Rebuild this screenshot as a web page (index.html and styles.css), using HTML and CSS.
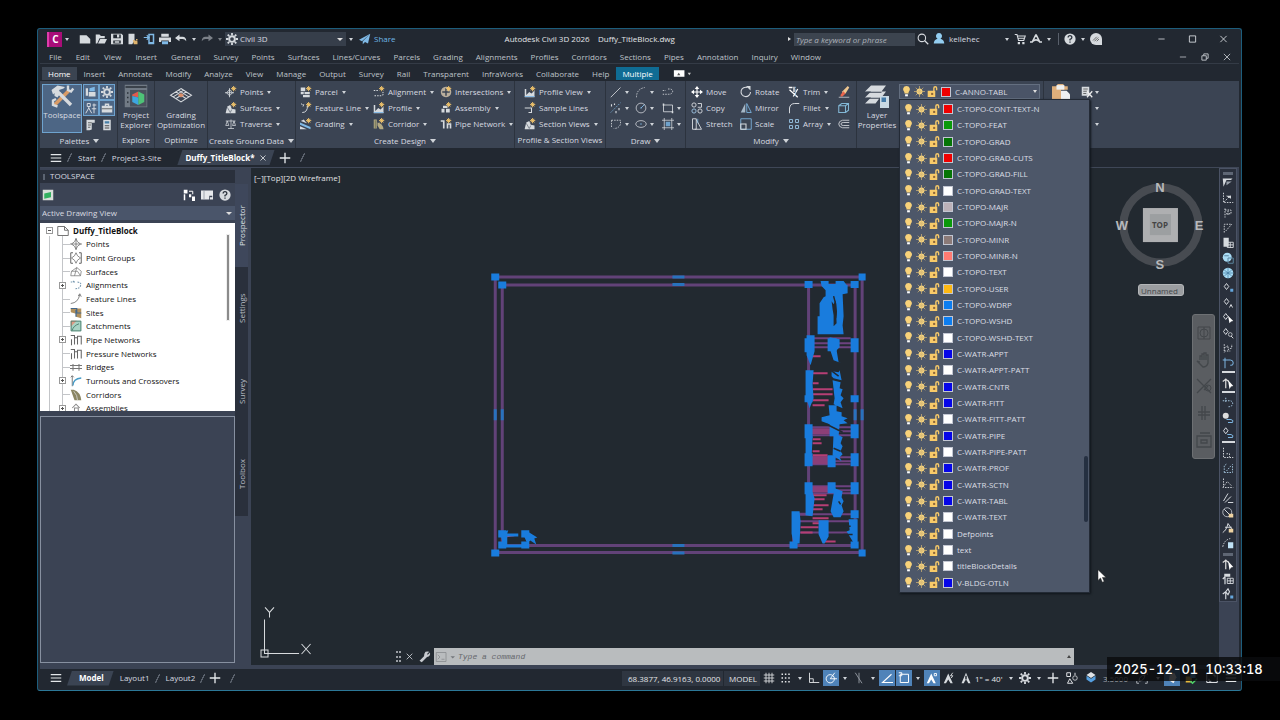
FILE: index.html
```html
<!DOCTYPE html>
<html lang="en">
<head>
<meta charset="utf-8">
<title>Autodesk Civil 3D 2026 - Duffy_TitleBlock.dwg</title>
<link rel="stylesheet" href="styles.css">
</head>
<body>
<div class="window">
  <header class="titlebar">
    <button class="logo" aria-label="Application menu">C</button>
    <button class="caret"></button>
    <div class="quick">
      <button data-icon="new"></button><button data-icon="open"></button><button data-icon="save"></button><button data-icon="saveas"></button><button data-icon="mobile"></button><button data-icon="print"></button><button data-icon="undo"></button>
    </div>
    <button class="caret"></button>
    <button class="slot dim" data-icon="redo"></button>
    <button class="caret dim"></button>
    <label class="workspace"><span data-icon="gear"></span><select aria-label="Workspace"><option>Civil 3D</option></select></label>
    <button class="caret"></button>
    <button class="share"><span data-icon="plane"></span>Share</button>
    <h1 class="caption">Autodesk Civil 3D 2026 &nbsp;&nbsp; Duffy_TitleBlock.dwg</h1>
    <button class="caret side"></button>
    <input class="search" type="text" aria-label="Search" placeholder="Type a keyword or phrase">
    <button class="slot" data-icon="mag"></button>
    <button class="slot" data-icon="user"></button>
    <span class="username">kellehec</span>
    <button class="caret"></button>
    <button class="slot" data-icon="cart"></button>
    <button class="slot" data-icon="auto"></button>
    <button class="caret"></button>
    <span class="vline"></span>
    <button class="slot" data-icon="help"></button>
    <button class="caret"></button>
    <button class="slot assist" data-icon="assist"></button>
    <button class="win" data-icon="min"></button><button class="win" data-icon="max"></button><button class="win" data-icon="close"></button>
  </header>

  <nav class="menubar">
    <a href="#">File</a><a href="#">Edit</a><a href="#">View</a><a href="#">Insert</a><a href="#">General</a><a href="#">Survey</a><a href="#">Points</a><a href="#">Surfaces</a><a href="#">Lines/Curves</a><a href="#">Parcels</a><a href="#">Grading</a><a href="#">Alignments</a><a href="#">Profiles</a><a href="#">Corridors</a><a href="#">Sections</a><a href="#">Pipes</a><a href="#">Annotation</a><a href="#">Inquiry</a><a href="#">Window</a>
    <span class="docbuttons"><button data-icon="min"></button><button data-icon="restore"></button><button data-icon="close"></button></span>
  </nav>

  <nav class="tabs">
    <button class="on">Home</button><button>Insert</button><button>Annotate</button><button>Modify</button><button>Analyze</button><button>View</button><button>Manage</button><button>Output</button><button>Survey</button><button>Rail</button><button>Transparent</button><button>InfraWorks</button><button>Collaborate</button><button>Help</button><button class="context">Multiple</button><button class="fold" data-icon="fold"></button>
  </nav>

  <section class="ribbon">
    <div class="panel palettes">
      <div class="body">
        <button class="big lit"><span data-icon="tools"></span>Toolspace</button>
        <div class="pals">
          <button class="lit" data-icon="pal1"></button><button class="lit" data-icon="gear"></button>
          <button class="lit" data-icon="tripod"></button><button class="lit" data-icon="case"></button>
          <button data-icon="sheet"></button><button data-icon="calc"></button>
        </div>
      </div>
      <button class="name drop">Palettes</button>
    </div>
    <div class="panel explore">
      <div class="body"><button class="big"><span data-icon="explorer"></span>Project<br>Explorer</button></div>
      <span class="name">Explore</span>
    </div>
    <div class="panel optimize">
      <div class="body"><button class="big"><span data-icon="grading"></span>Grading<br>Optimization</button></div>
      <span class="name">Optimize</span>
    </div>
    <div class="panel ground">
      <div class="body rows">
        <button class="cmd drop"><span data-icon="cgpoint"></span>Points</button>
        <button class="cmd drop"><span data-icon="surface"></span>Surfaces</button>
        <button class="cmd drop"><span data-icon="scale2"></span>Traverse</button>
      </div>
      <button class="name drop">Create Ground Data</button>
    </div>
    <div class="panel design">
      <div class="body rows">
        <button class="cmd drop"><span data-icon="parcel"></span>Parcel</button>
        <button class="cmd drop"><span data-icon="feature"></span>Feature Line</button>
        <button class="cmd drop"><span data-icon="slope"></span>Grading</button>
        <button class="cmd drop"><span data-icon="align"></span>Alignment</button>
        <button class="cmd drop"><span data-icon="profile"></span>Profile</button>
        <button class="cmd drop"><span data-icon="corridor"></span>Corridor</button>
        <button class="cmd drop"><span data-icon="cross"></span>Intersections</button>
        <button class="cmd drop"><span data-icon="assembly"></span>Assembly</button>
        <button class="cmd drop"><span data-icon="pipe"></span>Pipe Network</button>
      </div>
      <button class="name drop">Create Design</button>
    </div>
    <div class="panel views">
      <div class="body rows">
        <button class="cmd drop"><span data-icon="profile"></span>Profile View</button>
        <button class="cmd"><span data-icon="sample"></span>Sample Lines</button>
        <button class="cmd drop"><span data-icon="surface"></span>Section Views</button>
      </div>
      <span class="name">Profile &amp; Section Views</span>
    </div>
    <div class="panel draw">
      <div class="body rows">
        <button class="cmd drop"><span data-icon="line"></span></button>
        <button class="cmd drop"><span data-icon="dots"></span></button>
        <button class="cmd drop"><span data-icon="curve"></span></button>
        <button class="cmd drop"><span data-icon="arc"></span></button>
        <button class="cmd drop"><span data-icon="circle"></span></button>
        <button class="cmd drop"><span data-icon="ellipse"></span></button>
        <button class="cmd"><span data-icon="pline"></span></button>
        <button class="cmd drop"><span data-icon="rect"></span></button>
        <button class="cmd drop"><span data-icon="hatch"></span></button>
      </div>
      <button class="name drop">Draw</button>
    </div>
    <div class="panel modify">
      <div class="body rows">
        <button class="cmd"><span data-icon="move"></span>Move</button>
        <button class="cmd"><span data-icon="copy"></span>Copy</button>
        <button class="cmd"><span data-icon="stretch"></span>Stretch</button>
        <button class="cmd"><span data-icon="rotate"></span>Rotate</button>
        <button class="cmd"><span data-icon="mirror"></span>Mirror</button>
        <button class="cmd"><span data-icon="scale"></span>Scale</button>
        <button class="cmd drop"><span data-icon="trim"></span>Trim</button>
        <button class="cmd drop"><span data-icon="fillet"></span>Fillet</button>
        <button class="cmd drop"><span data-icon="array"></span>Array</button>
        <button class="cmd"><span data-icon="erase"></span></button>
        <button class="cmd"><span data-icon="box3d"></span></button>
        <button class="cmd"><span data-icon="offset"></span></button>
      </div>
      <button class="name drop">Modify</button>
    </div>
    <div class="panel layers">
      <div class="body">
        <button class="big"><span data-icon="layers"></span>Layer<br>Properties</button>
        <div class="combo">
          <button class="current"><span data-icon="bulb"></span><span data-icon="sun"></span><span data-icon="lock"></span><span class="swatch red"></span>C-ANNO-TABL</button>
          <ul class="layerlist" role="listbox" aria-label="Layers"></ul>
        </div>
      </div>
    </div>
    <div class="panel clip">
      <div class="body">
        <button class="paste" data-icon="paste"></button>
        <div class="stack"><button class="cmd drop"><span data-icon="cut"></span></button><button class="cmd drop"><span></span></button><button class="cmd drop"><span></span></button></div>
      </div>
    </div>
  </section>

  <nav class="files">
    <button class="burger" data-icon="burger"></button><i class="slash"></i>
    <a href="#">Start</a><i class="slash"></i><a href="#">Project-3-Site</a><a class="on" href="#">Duffy_TitleBlock*<span data-icon="close"></span></a>
    <button class="plus" data-icon="plus"></button><i class="slash"></i>
  </nav>

  <main class="work">
    <aside class="toolspace">
      <h2>TOOLSPACE</h2>
      <div class="tsbar"><button data-icon="green"></button><button class="push" data-icon="blocks"></button><button data-icon="panel"></button><button data-icon="help"></button></div>
      <div class="tsview"><select aria-label="View"><option>Active Drawing View</option></select></div>
      <div class="treebox"><ul class="tree"></ul><span class="thumb"></span></div>
      <div class="preview"></div>
    </aside>
    <nav class="sidetabs"><button class="on">Prospector</button><button>Settings</button><button>Survey</button><button>Toolbox</button></nav>
    <section class="canvas">
      <svg class="drawing" viewBox="251 168 967 498" preserveAspectRatio="xMinYMin slice">
        <g class="frame">
          <path d="M495 277H861.500V552H495ZM502 285H854.500V545H502Z"/>
          <path d="M808 285V514H793V545"/>
        </g>
        <g class="bands">
          <path d="M808 338H850M808 343H854M808 347H854M808 427H854M808 431H854M808 435H854M808 457H854M808 461H854M808 464H850M808 486H854M808 490H854M808 493H854M793 514H854M793 521H850M797 532H850"/>
        </g>
        <path class="band" d="M808 428h22v6h-22zM808 456h22v8h-22zM808 486h22v6h-22z"/>
        <path class="pink" d="M812 356H820M812 373H827M812 383H818M812 389H832M812 394H832M812 400H828M812 405H824M812 439H820M812 443H821M812 451H819M812 455H827M812 495H826M812 499H824M812 505H828M812 509H822M812 518H828M812 523H824M800 527H818M800 532H812M824 541H835M505 536L514 535"/>
        <g class="grips">
          <path d="M491 273.500h8v7h-8zM498 281.500h8v7h-8zM858 273.500h7v7h-7zM858 549h7v7h-7zM491 549h8v7h-8zM498 541h8v7h-8zM521 541h8v7h-8zM498 530h8v7h-8zM521 530h8v7h-8zM804 281h8v7h-8zM850 281h8v7h-8zM850 395h8v7h-8zM804 395h8v7h-8zM789 541h8v7h-8zM850 541h8v7h-8z"/>
          <path d="M804 338h8v14h-8zM850 338h8v14h-8zM827 338h9v13h-9zM804 424h8v14h-8zM850 424h8v14h-8zM804 453h8v13h-8zM850 453h8v13h-8zM827 455h8v12h-8zM804 482h8v12h-8zM850 482h8v12h-8zM827 482h8v11h-8zM850 510h8v8h-8z"/>
          <path class="mid" d="M672 275.500h12v3h-12zM672 283h12v3h-12zM672 543.500h12v3h-12zM672 551h12v3h-12zM493.500 409h3v11h-3zM500.500 409h3v11h-3zM860 409h3v11h-3zM853 409h3v11h-3z"/>
          <path d="M820 281h8v3h7v-3h8l3 4h1v8l-5 1 1 22-1 9 1 9h-11v-7l4-4-1-23-2 4-2-3 1 8 1 6v19h-16v-18h2v-13l4-6 2-1v-6l-4-4z"/>
          <path d="M806 335h8v16l-4 14-4-10v-20zM804 370h9l-1 14 1 14-4 10-4-12v-26zM805 436h7l-1 22h-6zM805 492h7l2 6-2 18-7-1zM829 337l10 2v8l-3 3 2 12 3 1-8-3-4-12zM831 371l7 1 1-2 2 10-8-2-2-2zM832 380l8 2-1 6 3 1-2 6 3 3-3 4 2 6-9-4 1-6zM828 405h8v6l5 1v4l6 2-4 2 4 3-8 1-1 12h-9v-12l-8-3v-4l8-2zM833 432l9 5-2 6 2 3-2 5 2 3-3 3 2 4-9-6zM834 488l8 3-1 6 2 4-2 4 2 6-3 6h-7l-3-6z"/>
          <path d="M791 511h8l1 10-1 22h-6l-2-10zM818 520h10v16l-4 7h-2l-4-9zM848 519h9v22l-3 3-8-13 3-1zM500 532l8-2-1 3h11v3h-11v8h16v3h-20zM525 532h4l8 5-3 1 2 6-6-4-3 3-4-9z"/>
        </g>
        <path class="gap" d="M833 296q4 12 2 22M826 424l16 8M830 370l8 6M833 448l7 3M843 526h7M843 534h9M838 501l2 3"/>
        <g class="ucs"><path d="M264.500 619V653H299M261 649.500h7v7h-7zM265 607l4.500 5 4.500-5M269.500 612v5M301.500 643.500l9 10M310.500 643.500l-9 10"/></g>
        <circle class="ring" cx="1160" cy="225" r="37.500"/>
        <rect class="cubeface" x="1142" y="208" width="35" height="34"/><rect class="cubecore" x="1149" y="214" width="21" height="21"/>
        <g class="compass"><text x="1159" y="192">N</text><text x="1159" y="269">S</text><text x="1121" y="230">W</text><text x="1198" y="230">E</text></g>
        <text class="top" x="1159" y="228">TOP</text>
      </svg>
      <span class="viewlabel">[&minus;][Top][2D Wireframe]</span>
      <button class="unnamed">Unnamed</button>
      <div class="navbar"><span data-icon="wheel"></span><span data-icon="hand"></span><span data-icon="zoomx"></span><span data-icon="orbit"></span><span data-icon="movie"></span></div>
      <div class="commandline">
        <span class="grip"></span><button data-icon="close"></button><button data-icon="wrench"></button>
        <div class="entry"><span data-icon="prompt"></span><input type="text" aria-label="Command" placeholder="Type a command"><button class="up"></button></div>
      </div>
    </section>
    <aside class="rightbar"><div class="strip"></div></aside>
  </main>

  <footer class="status">
    <div class="files layouts"><button class="burger" data-icon="burger"></button><a class="on" href="#">Model</a><a href="#">Layout1</a><i class="slash"></i><a href="#">Layout2</a><i class="slash"></i><button class="plus" data-icon="plus"></button><i class="slash"></i></div>
    <div class="toggles">
      <span class="coords">68.3877, 46.9163, 0.0000</span><button class="model">MODEL</button>
      <button data-icon="grid"></button><button data-icon="snap"></button><button class="caret"></button>
      <button data-icon="ortho"></button><button class="lit" data-icon="polar"></button><button class="caret"></button>
      <button data-icon="iso"></button><button class="caret"></button>
      <button class="lit" data-icon="angle"></button><button class="lit" data-icon="osnap"></button><button class="caret"></button>
      <button class="lit" data-icon="anno1"></button><button data-icon="anno2"></button><button data-icon="anno3"></button>
      <button class="ratio">1" = 40'</button><button class="caret"></button>
      <button data-icon="gear"></button><button class="caret"></button>
      <button data-icon="plus"></button><button class="wide" data-icon="shapes"></button><button data-icon="hex"></button>
      <span class="value">3.5000</span>
      <button class="wide" data-icon="leaf"></button><button class="caret"></button><button class="lit" data-icon="tag"></button><button class="wide" data-icon="cards"></button><button class="wide" data-icon="full"></button><button data-icon="burger"></button>
    </div>
  </footer>
</div>
<svg class="pointer" viewBox="0 0 10 14"><path d="M1 .7V11.400L3.500 9 5.300 13.200 7.200 12.400 5.400 8.400H9Z"/></svg>
<time class="stamp">2025-12-01&nbsp; 10:33:18</time>
<script src="app.js"></script>
</body>
</html>
```
FILE: styles.css
```css
*{box-sizing:border-box}
body{margin:0;height:100vh;padding:28px 38px 29px 37px;background:#000;color:#d8dbe0;font:8px/12px "Open Sans","Noto Sans",sans-serif;overflow:hidden;position:relative}
button,input,select{font:inherit;color:inherit;background:none;border:0;padding:0;margin:0;text-align:left}
a{color:inherit;text-decoration:none}
h1,h2,ul{margin:0;padding:0;font:inherit;list-style:none}
svg{display:block;width:100%;height:100%}
[data-icon]{display:inline-block;flex:none;width:12px;height:12px}
.window{height:100%;display:flex;flex-direction:column;background:#222831;border:1px solid #1d5d7c;border-radius:3px;border-bottom-color:#2c7898;white-space:nowrap;padding:0 2px 0 2px}
.caret{flex:none;width:10px;height:12px;display:grid;place-items:center}
.caret::after,.drop::after{content:"";border:2px solid transparent;border-top:3px solid #cfd3d8;border-bottom:0}
.dim{opacity:.5}
.caret.side::after{border:2px solid transparent;border-left:3px solid #ddd;border-right:0}

.titlebar{flex:none;height:20px;display:flex;align-items:center;padding:0 0 0 7px}
.logo{width:15px;height:15px;background:#a90d78;border-left:2px solid #de3cab;color:#fff;font-weight:700;font-size:10px;line-height:14px;text-align:center}
.quick{display:flex;margin-left:5px}
.quick [data-icon]{margin:0 2px}
.slot[data-icon]{margin:0 2px}
.workspace{display:flex;align-items:center;width:121px;height:14px;background:#363e4a;padding-left:1px;gap:2px;position:relative}
.workspace select,.tsview select{flex:1;appearance:none;height:100%}
.workspace::after,.tsview::after{content:"";margin-right:3px;border:3px solid transparent;border-top-color:#ddd;border-bottom:0}
.share{display:flex;color:#6fb6e6;align-items:center;gap:3px;margin-left:3px}
.caption{flex:1;text-align:center;color:#e3e5e8}
.search{width:121px;height:13px;background:#3c444f;font-style:italic;padding-left:2px}
.search::placeholder{color:#aeb3ba}
.username{width:55px;padding-left:2px}
.vline{width:1px;height:12px;background:#59606b;margin:0 3px 0 4px}
.assist{margin-right:44px!important}
.win[data-icon]{width:31px;height:10px}

.menubar{flex:none;height:15px;display:flex;align-items:center;gap:13px;padding:2px 0 0 9px;border-bottom:1px solid #343b46;color:#bfc3c9}
.menubar a:nth-child(-n+4){margin-right:1px}
.docbuttons{margin-left:auto;display:flex;gap:12px;padding-right:7px}
.docbuttons [data-icon]{width:10px;height:10px}

.tabs{flex:none;height:17px;display:flex;align-items:flex-end;gap:1px;padding:0 0 1px 2px;color:#bfc3c9}
.tabs button{padding:0 6px;height:13px}
.tabs .on{background:#3b4451;color:#fff}
.tabs .context{background:#0f6c94;color:#fff}
.tabs .fold{margin-left:12px;padding:0;width:20px}

.ribbon{flex:none;height:67px;display:flex;background:#3b4453}
.panel{flex:none;border-right:1px solid #2c333e;display:flex;flex-direction:column;align-items:center;padding-top:3px}
.body{height:49px;display:flex;width:100%}
.name{height:15px;line-height:14px;margin-top:auto}
.name.drop::after,.cmd.drop::after{display:inline-block;margin-left:4px;vertical-align:1px}
.name.drop::after{border-width:4px 3px 0}
.panel.palettes{width:78px;padding-left:2px}.explore{width:37px}.optimize{width:53px}.ground{width:88px}.design{width:219px}.views{width:91px}.draw{width:80px}.modify{width:171px}.layers{width:187px;z-index:2}
.panel.clip{border:0;flex:1}
.big{display:flex;flex-direction:column;align-items:center;text-align:center;line-height:10px;width:100%}
.big [data-icon]{width:24px;height:24px;margin-bottom:2px}
.palettes .big{width:40px;height:49px}
.lit{background:#4d6685;outline:1px solid #6ea3cf;outline-offset:-1px}
.pals{display:grid;grid-template-columns:16px 16px;margin-left:1px}
.pals [data-icon]{width:16px;height:16px;padding:2px}
.rows{display:grid;grid-auto-flow:column;grid-template-rows:repeat(3,16px);justify-content:start}
.cmd{display:flex;align-items:center}
.cmd.drop::after{border-width:3px 2px 0}
.cmd [data-icon]{margin-right:3px}
.ground .rows{padding-left:17px}
.design .rows{padding-left:4px;grid-template-columns:73px 67px 76px}
.views .rows{padding-left:9px}
.draw .rows{padding-left:4px;grid-template-columns:25px 27px 25px}
.draw .cmd [data-icon]{margin-right:0}
.draw .cmd.drop::after{margin-left:3px}
.modify .rows{padding-left:5px;grid-template-columns:49px 48px 50px 14px}
.layers .big{width:40px}
.combo{position:relative;width:141px;margin-left:2px}
.current{display:flex;align-items:center;width:141px;height:15px;background:#4a5467;border:1px solid #646f80;padding-left:1px}
.current::after{content:"";margin-left:auto;margin-right:2px;border:2px solid transparent;border-top:3px solid #ddd;border-bottom:0}
.current [data-icon],.layerlist [data-icon]{width:11px;height:11px;margin-right:2px}
.swatch{width:10px;height:10px;border:1px solid #c2c6d2;margin:0 4px 0 1px;flex:none}
.red{background:#f00000}.green{background:#0a990a}.dark{background:#067506}.white{background:#fff}.rose{background:#bcb1b8}.brown{background:#8b7a78}.salmon{background:#ff7a72}.gold{background:#fdb813}.azure{background:#0c7df0}.blue{background:#0505e8}
.layerlist{position:absolute;left:0;top:15px;width:191px;height:494px;background:#4d5769;border:1px solid #232a35;padding:1px 0 1px 3px;display:flex;flex-direction:column;box-shadow:1px 1px 2px #10151b;color:#dcdfe5}
.layerlist li{flex:1;display:flex;align-items:center}
.layerlist::after{content:"";position:absolute;right:1px;top:356px;width:4px;height:66px;background:#253041;border-radius:2px}
.paste{margin-left:8px}
.paste[data-icon]{width:18px;height:18px}
.stack{display:grid;grid-template-rows:repeat(3,16px);margin-left:11px}
.stack .cmd span{width:12px;margin:0}
.stack .cmd::after{margin-left:2px}

.files{flex:none;height:19px;display:flex;align-items:center;padding-left:10px}
.files .plus{margin:0 4px 0 4px}
.slash{width:5px;height:9px;background:linear-gradient(115deg,transparent 42%,#5b626d 44% 58%,transparent 60%)}
.files .slash{margin-left:5px}
.files a{margin-left:16px}
.files .slash+a{margin-left:6px}
.files a.on{display:flex;align-items:center;height:15px;padding:0 8px 0 8px;background:#3b4453;font-weight:700;color:#fff;clip-path:polygon(5px 0,100% 0,calc(100% - 5px) 100%,0 100%)}
.files a.on [data-icon]{width:8px;height:8px;margin-left:4px}

.work{flex:1;min-height:0;display:flex;background:#3b4354;border-top:1px solid #3f4757}
.toolspace{width:195px;flex:none;display:flex;flex-direction:column;padding:2px 0 4px}
.toolspace h2{height:13px;background:#2a303c;padding-left:10px;position:relative}
.toolspace h2::before{content:"";position:absolute;left:3px;top:4px;height:6px;border-left:2px solid #5c6472}
.tsbar{height:23px;display:flex;align-items:center;gap:6px;padding:0 4px 0 2px}
.push{margin-left:auto}
.tsview{height:14px;background:#4a556a;display:flex;align-items:center;padding-left:2px}
.treebox{height:188px;margin-top:3px;background:#fff;color:#111;position:relative;overflow:hidden}
.tree{height:192px;display:flex;flex-direction:column;padding-top:1px;position:relative}
.tree::before,.tree::after{content:"";position:absolute;border-left:1px solid #c3c5c8;top:13px;bottom:0;left:9px}
.tree::after{left:22px}
.tree li{flex:1;display:flex;align-items:center;padding-left:30px}
.tree li:first-child{padding-left:17px;font-weight:700}
.tree [data-icon]{margin-right:4px}
.tree i{width:7px;height:1px;background:#c3c5c8;margin-left:-7px}
.tree b{width:7px;height:7px;border:1px solid #999;background:#fff linear-gradient(#555,#555) center/3px 1px no-repeat;margin:0 4px 0 -11px;z-index:1}
.tree b.more{background:linear-gradient(#555,#555) center/3px 1px no-repeat,linear-gradient(#555,#555) center/1px 3px no-repeat,#fff}
.thumb{position:absolute;right:6px;top:12px;width:2px;height:85px;background:#8b8b8b;box-shadow:0 0 0 1px #eee}
.preview{flex:1;border:1px solid #8790a0;margin-top:5px}
.sidetabs{width:13px;flex:none;height:348px;display:flex;flex-direction:column;padding-top:16px}
.sidetabs button{flex:1;writing-mode:vertical-rl;transform:rotate(180deg);text-align:center;line-height:13px;background:#2a303c;color:#b9bdc4}
.sidetabs .on{background:#3e475b;color:#dde0e5}
.canvas{flex:1;position:relative;background:#222930;margin-left:3px;overflow:hidden;margin-bottom:2px}
.drawing{position:absolute;inset:0}
.frame,.bands,.pink,.gap,.ucs{fill:none}
.frame{stroke:#624278;stroke-width:3}
.bands{stroke:#6d427f;stroke-width:2}
.band{fill:#8c3f77}
.pink{stroke:#b63f74;stroke-width:2}
.grips{fill:#197cdd}
.mid{fill:#2872bd}
.gap{stroke:#222930;stroke-width:1.500}
.ucs{stroke:#d8dbde;stroke-width:1}
.ring{fill:none;stroke:#474b51;stroke-width:8}
.cubeface{fill:#aeafb1}.cubecore{fill:#9c9fa1}
.compass{fill:#b7b9bc;font:bold 13px "Liberation Sans",sans-serif;text-anchor:middle}
.top{fill:#444;font:bold 8px "Open Sans",sans-serif;text-anchor:middle}
.viewlabel{position:absolute;left:3px;top:4px;color:#e2e4e6}
.unnamed{position:absolute;right:35px;top:116px;width:46px;height:12px;background:#9b9da0;border:1px solid #b4b6b8;border-radius:3px;color:#45484c;line-height:9px;padding-left:2px}
.navbar{position:absolute;right:4px;top:146px;width:23px;height:145px;background:#5a5d61;border:1px solid #6d7073;border-radius:3px;color:#43474b;display:flex;flex-direction:column;align-items:center;justify-content:space-evenly}
.navbar [data-icon]{width:16px;height:18px}
.commandline{position:absolute;left:145px;right:145px;bottom:0;height:17px;display:flex;align-items:center;gap:4px}
.grip{width:5px;height:11px;border:2px dotted #9a9ea4;border-width:0 2px}
.commandline>[data-icon]{width:9px;height:9px}
.commandline>[data-icon=wrench]{width:12px;height:12px}
.entry{flex:1;height:17px;background:#b9bcbe;display:flex;align-items:center;padding-left:2px;color:#5d6165}
.entry [data-icon]{width:20px}
.entry input{flex:1;font:italic 8px "Liberation Mono",monospace;height:14px;padding-left:2px}
.entry input::placeholder{color:#66696d}
.up{width:10px;height:10px;display:grid;place-items:center}
.up::after{content:"";border:2px solid transparent;border-bottom:3px solid #444;border-top:0}
.rightbar{flex:none;width:20px}
.strip{background:#2a303c;border:1px solid #4b5365;width:18px;display:flex;flex-direction:column;align-items:center}
.strip [data-icon]{height:15px;padding:2px 0 1px}
.strip hr{width:13px;height:2px;border:0;background:#d5d8dc;margin:1px 0 2px}
.strip em{width:10px;height:3px;background:#5e6674;margin:3px 0 0}

.status{flex:none;height:23px;display:flex;justify-content:space-between;border-top:2px solid #3b4354}
.layouts{height:18px;padding-left:10px}
.layouts a.on{margin-left:5px;padding:0 10px 0 12px}
.layouts a.on+a{margin-left:6px}
.toggles{display:flex;align-items:center;gap:1px;height:18px;color:#e3e5e8}
.toggles [data-icon]{width:16px;height:16px;padding:2px}
.toggles .wide{width:20px;padding:2px 4px}
.coords,.model,.ratio,.value{background:#2f3641;height:15px;line-height:15px}
.coords{width:101px;padding-left:6px}
.model{width:36px;padding-left:5px}
.ratio{width:30px;background:none}
.value{width:31px;padding-left:3px;color:#a9adb3;background:none}
.status .lit{background:#4f83b9;outline:0}
.pointer{position:absolute;left:1097px;top:569px;width:10px;height:14px;fill:#fff;stroke:#222;stroke-width:.500}
.stamp{position:absolute;right:0;top:657px;width:173px;height:24px;background:rgba(10,11,14,.82);color:#fff;font:500 13px/24px Inter,sans-serif;font-variant-numeric:tabular-nums;padding-left:7px}
```
FILE: app.js
```js
const Y = '#f3c46b', B = '#7fb9e6', W = '#d6dade';
const spark = `<path d="M11.500 0v7M8 3.500h7M9.200 1.200l4.600 4.600M13.800 1.200L9.200 5.800" stroke="${Y}" stroke-width="1.300"/>`;
const s = (d, w = 1.3, c = 'currentColor', x = '') => `<path d="${d}" fill="none" stroke="${c}" stroke-width="${w}" ${x}/>`;
const f = (d, c = W) => `<path d="${d}" fill="${c}" fill-rule="evenodd"/>`;
const dash = 'stroke-dasharray="2 1.500"';
const node = 'M8 1L10 5 14 8 10 11 8 15 6 11 2 8 6 5Z';
const icons = {
  new: f('M1 3h9l5 5v6H1z'), open: f('M1 2h5l2 2h5v3H6L3 14H1zM7 8h9l-3 6H4z'),
  save: f('M0 1h14l2 2v12H0zM3 2v5h10V2zM3 10v4h10v-4z') + f('M5 11h6v2H5zM8 2h3v4H8z'),
  saveas: f('M2 1h8v9l-3 5H2z') + f('M8 9l6 2v4H9zM12 8h2v2h-2z', '#e0b36c'),
  mobile: f('M7 1h8v14H7zM9 3v9h4V3z', B) + s('M1 6h7M5 3l3 3-3 3', 1.5, B),
  print: f('M3 1h10v4H3zM0 6h16v6h-3v-2H3v2H0z') + f('M4 11h8v4H4z', B),
  undo: f('M6 2v3h4q5 0 5 6-2-3-5-3H6v3L0 6.500z'), redo: f('M10 2v3H6Q1 5 1 11q2-3 5-3h4v3l6-4.500z'),
  gear: `<circle cx="8" cy="8" r="3.800" fill="none" stroke="${W}" stroke-width="2.600"/>` + s('M8 0v3M8 13v3M0 8h3M13 8h3M2.300 2.300l2 2M11.700 11.700l2 2M13.700 2.300l-2 2M4.300 11.700l-2 2', 2.4, W),
  plane: f('M15 1L0 9l4 2zM15 1L5 11v4l3-3 4 2z', B),
  mag: s('M10 10l5 5', 1.6) + '<circle cx="6.500" cy="6.500" r="5" fill="none" stroke="currentColor" stroke-width="1.400"/>',
  user: f('M8 0a4 4 0 0 1 2 7.500Q15 9 15 14H1Q1 9 6 7.500A4 4 0 0 1 8 0z', '#93cdf0'),
  cart: s('M1 2h3l2 8h7l2-6H5M5 7h9', 1.4) + f('M5 12h3v3H5zM11 12h3v3h-3z'),
  auto: s('M8 2L3 12H0M8 2l5 10h3M4 11q4-4 8 0', 2.2, W),
  help: `<circle cx="8" cy="8" r="7.500" fill="${W}"/>` + s('M5.500 6Q5.500 3.500 8 3.500T10.500 6Q10.500 7.500 8 8.500V10M8 11.300v1.700', 1.7, '#2b323c'),
  assist: f('M8 0a8 8 0 0 0 0 16h8V8a8 8 0 0 0-8-8z') + s('M4 10l5-5M6 11l5-5M9 11l3-3', 1.1, '#555'),
  min: s('M3 8h10', 1.3), max: s('M3 3h10v10H3z', 1.4), close: s('M3 3l10 10M13 3L3 13', 1.4),
  restore: s('M3 6h7v7H3zM6 6V3h7v7h-3', 1.5),
  fold: '<rect x="-2" y="4" width="13" height="8" fill="#fff"/><path d="M2 10l2-3 2 3z" fill="#555"/><path d="M15 7h4l-2 3z" fill="#ccc"/>',
  tools: s('M13 4L3 14', 2.3, '#d99b66') + f('M1 4l4-3 5 1-1 1-3 1 1 2-2 3-2-1V6L2 7z', W) + s('M6 6l8 8', 2.2, W) + s('M12 1v3l2 1 1.500-2M4 10l-2 1v3l3 1', 1.6, W),
  pal1: f('M1 3h3v10H1zM5 8h9v6H5z') + f('M6 3l7-2v6H6z', B),
  tripod: s('M3 2h4v4H3zM5 6v3M1 15l4-7 4 7M10 4h5M12 2v13M9 9h6'), case: f('M1 5h14v9H1zM5 2h6v3H9V4H7v1H5z') + s('M1 9h14', 1, '#444'),
  sheet: f('M2 1h11v4H9v9l-3 1H2z') + s('M4 5h5M4 8h4M4 11h3', 1, '#444'), calc: f('M3 1h10v14H3z') + f('M5 3h6v3H5z', '#477fa6') + s('M5 9h6M5 12h6', 1.3, '#444'),
  explorer: '<rect x=".500" y=".500" width="15" height="15" fill="#717a85"/><rect x="4" y="4" width="11" height="11" fill="#4a525d"/><path d="M1 2h14M2 6h1M2 9h1M2 12h1" stroke="#2a3038"/>' + f('M5.500 7l4-2v4l-4-1z', '#e05a4e') + f('M9.500 5l4 2v5l-4 2z', '#4ec277') + f('M5.500 8l4 1v5l-4-2z', '#3da6df'),
  grading: s('M8 3l7 4.500L8 12 1 7.500zM4.500 5.200l7 4.600M11.500 5.200l-7 4.600M6.200 4.100l7 4.500M9.800 4.100l-7 4.500', .7, W) + f('M8 6l2 1.500L8 9 6 7.500z', '#d98d68'),
  cgpoint: s('M6 5l4 4-4 4-4-4zM6 3v12M0 9h12', 1.2, W) + spark,
  surface: f('M1 14L3 6l4-2 2 5 5 1v5H1z') + s('M3 7l4 7 2-4', .8, '#46505e') + spark,
  scale2: s('M1 4h13M8 2v12M4 14h8M1 10l2-6 2 6zM10 10l2-6 2 6z', 1, W),
  parcel: f('M1 2h6v5H1zM1 8h4v3H1zM6 8h7v3H6zM4 12h9v3H4z') + spark, feature: s('M2 2l1 2M5 3l-1 3M3 14q7 0 7-9', 1.3, W) + spark,
  slope: f('M0 6l14 6v3L0 9z', B) + f('M1 4l4-2 4 5z') + f('M0 11l9 4H0z') + spark,
  align: s('M1 6h6M2 13h9q4-1 2-5', 1.4, W, dash) + spark, profile: f('M1 4h2v8l4-4 3 2 4-4v9H1z') + s('M1 14h13', 1.2, B) + spark,
  corridor: f('M1 2h4v12H1zM6 6q7 1 8 9H9L6 10z', '#b5aa82') + s('M3 3v11', 1, '#59624a') + spark,
  cross: f('M8 1a7 7 0 1 0 .1 0zM7 3v4H3v2h4v4h2V9h4V7H9V3z', '#b9ae9c') + spark,
  assembly: f('M2 9h4v5H2zM8 9h5v5H8zM4 5h6v3H4z') + spark, pipe: s('M1 4h4v10M10 14V8h4v6', 2.2, W) + spark, sample: s('M1 8h9v6H6', 1.4, W) + spark,
  line: s('M1 15L14 2', 1.1), dots: s('M1 14L14 1', 1, B, dash) + s('M2 3v3M6 2v2M12 8v3M8 12v3', 1.5), curve: s('M2 3h12v5q-2 6-9 6M2 3v9', 1.1, 'currentColor', dash),
  arc: s('M2 15Q2 4 13 2', 1.1, 'currentColor', dash), circle: s('M8 8l5-5M7 8h2', 1.2, B) + '<circle cx="8" cy="8" r="6.500" fill="none" stroke="currentColor"/>',
  ellipse: '<ellipse cx="8" cy="8" rx="7" ry="4.500" fill="none" stroke="currentColor"/>' + s('M7 8h2', 1.4, B), pline: s('M1 6h4M8 4h3q4 1 3 4-1 3-5 3H1', 1.1, 'currentColor', dash),
  rect: s('M2 4h12v9H2z', 1.1) + f('M1 2h2v3H1zM13 12h2v3h-2z'), hatch: s('M3 0v16M13 0v16M0 3h16M0 13h16', 1, W) + f('M5 5h6v6H5z', '#6ea1ca'),
  move: s('M8 2v12M2 8h12', 1.5, '#fff') + f('M8 0l3 4H5zM8 16l3-4H5zM0 8l4-3v6zM16 8l-4-3v6z', '#fff'),
  copy: '<g fill="none" stroke="currentColor" stroke-width="1.200"><circle cx="4" cy="4" r="2.800"/><circle cx="12" cy="12" r="2.800"/><circle cx="4" cy="12" r="2.800" stroke="#9fc5e4"/></g>' + s('M9 2h5v5H9', 1.2),
  stretch: s('M2 1h5v14H2zM7 2l7 13H5', 1.2) + s('M9 1v6', 1, B), rotate: s('M10 2A6.300 6.300 0 1 0 14 8', 1.4) + f('M8 0h6v6z'),
  mirror: f('M1 14L7 2v12z', '#a6b8c7') + s('M9 2l6 12H9z', 1.1, B), scale: s('M1 1h14v14H1z', 1.1, B) + s('M1 8h7v7H1z', 1.4),
  trim: s('M1 2h5M8 1v7M2 5l11 10M13 4L7 14', 1.7, '#fff') + s('M10 1v14', 1, B, dash), fillet: s('M2 15V8Q3 2 9 2h6', 1.3),
  array: s('M2 2h4v4H2zM10 2h4v4h-4zM2 10h4v4H2zM10 10h4v4h-4z', 1.3, '#91b9d9'), erase: f('M13 0l2 2-5 8-5 2 1-5z', '#efc790') + f('M4 11l3-4 3 3-4 4H3z', '#e8654d') + s('M1 15h14', 1, W),
  box3d: s('M1 5h9v9H1zM1 5l4-3h9v9l-4 3M10 5l4-3', 1.4, '#82b7d5'), offset: s('M15 3H6Q1 4 1 8t5 5h9M15 6H7Q4 6 4 8t3 2h8', 1.1),
  layers: f('M4 1h10l-3 4H0zM4 5h10l-3 4H0zM4 9h6l-3 4H0z') + s('M1 5.500h10M1 9.500h9', .7, '#3b4453') + f('M10 8h6v8h-6z', '#c9d9e4') + f('M11 9h3v3h-3z', '#447ba8'),
  bulb: f('M8 0a5 5 0 0 1 3 9v2H5V9a5 5 0 0 1 3-9z', '#f8d27a') + f('M6 12h4v3H6z', '#fff'),
  sun: `<circle cx="8" cy="8" r="4.300" fill="#f8d680"/>` + s('M8 0v16M0 8h16M2.500 2.500l11 11M13.500 2.500l-11 11', 1, '#d9ba75'),
  lock: f('M1 7h8V3q0-3 3-3t3 3v3h-2V3q0-1-1-1t-1 1v4h1v9H1z', '#f8ca69') + f('M6 10h3v3H6z', '#8d663b'),
  paste: f('M0 2h4l1-2h5l1 2h3v3H8v11H0z', '#dfaf7b') + f('M4 1h7v4H4z', '#eef0f2') + f('M8 6h5l3 3v7H8z', '#eef0f2'),
  cut: f('M1 1h10v12H1z') + s('M3 4h6M3 7h5M3 10h4', 1, '#444') + s('M8 7l7 8M15 7l-7 8', 1.6, '#eee'),
  burger: s('M1 3.500h14M1 8h14M1 12.500h14', 1.6, '#e4e7ea'), plus: s('M8 1v14M1 8h14', 1.8, '#e4e7ea'),
  green: '<rect x="1" y="1" width="14" height="14" fill="#d9ded9"/>' + f('M3 6l9-2v7l-9 2z', '#33b060'),
  blocks: f('M1 1h5v5H1zM1 7h2v8H1zM8 7h3v4H8zM12 10h4v6h-4z', '#fff') + s('M8 3h5v4', 1.3, '#fff'), panel: f('M0 2h16v12h-4v-3h3V9h-4v5H0z', '#e7e9ec') + s('M4 2v12', 1, '#89919c'),
  doc: s('M1 2h9l5 5v7H1zM10 2v5h5', 1.2, '#666'),
  tpoint: s(node + 'M8 0v16M0 8h16', 1, '#666'), tgroup: s(node, 1, '#666') + s('M4 1H1v14h3M12 1h3v14h-3', 1.2, '#555'),
  tsurf: s('M1 13L2 7l7-5 6 5-1 6zM2 7l8 0 4 6M9 2L6 13', 1, '#777'), talign: s('M1 4h7M4 4l2-2M10 4q6 1 4 5-1 4-7 4', 1.4, '#7395ad', dash),
  tfeat: s('M1 14q10-1 12-12M11 4l2-3 2 4', 1.2, '#777'), tsite: f('M1 2h14v13l-7-2V9L1 7z', '#b1905c') + s('M1 2h8v6h6M8 4v9', 1.6, '#43688d'),
  tcatch: f('M1 1h14v14H1z', '#a9d4c5') + f('M1 1h8L1 9z', '#e09b86') + s('M1.500 1.500h13v13h-13zM3 14q1-6 9-9', 1.2, '#477c6c'),
  tpipe: s('M1 2h5v12M10 14V3h5v11M6 5h4M2 7v8', 1.4, '#666'), tbridge: s('M0 6h16M0 10h16M4 4v9M12 4v9', 1.4, '#777'),
  tturn: s('M3 1v14M1 3l2-2 2 2', 1.3, '#777') + s('M4 14q0-9 11-10', 1.7, '#459bc7'), tcorr: f('M1 1h4q9 3 10 14H6z', '#8b8663') + s('M5 3q5 5 5 12', 1, '#ddd'),
  tasm: s('M1 13h5V8h5v5h4M3 8l5-5 5 5', 1.4, '#888'),
  wheel: s('M2 2h12v12H2zM8 2v12', 1) + '<circle cx="8" cy="8" r="4" fill="none" stroke="currentColor"/>', hand: s('M4 8V4h2v4-6h2v6-7h2v7-5h2v8q-1 4-5 4L1 9l3 1'),
  zoomx: s('M1 1l14 14M15 1L1 15M8 12l4-4') + '<circle cx="12" cy="10" r="3" fill="none" stroke="currentColor"/>', orbit: s('M6 1v14M9 1v14M2 7h12M2 10h12'), movie: s('M1 4h14v11H1zM4 1h10M5 8h6v3H5z'),
  wrench: f('M10 1q3-1 5 0l-3 3 1 1 3-3q1 5-4 6L5 15 2 13l6-6q0-4 2-6z', '#c7cacf'), prompt: s('M-5 2h13v12h-13zM-3 5l3 3-3 3M2 11h4', 1, '#85888b') + f('M14 7h6l-3 3z', '#75787c'),
  grid: s('M4 1v14M8 1v14M12 1v14M1 4h14M1 8h14M1 12h14', 1.1), snap: s('M2 3h13M2 8h13M2 13h13', 2, 'currentColor', 'stroke-dasharray="2 2.500"'),
  ortho: s('M2 1v13h13M2 9h5v5', 1.2), polar: '<circle cx="7" cy="9" r="5.500" fill="none" stroke="#fff" stroke-width="1.200"/>' + s('M7 9h9M7 9l6-8', 1.2, '#fff'),
  iso: s('M3 1l9 14M8 1v14', 1.2, '#959ba4'), angle: s('M14 3L2 14h14', 1.4, '#fff'), osnap: s('M3 3h11v11H3zM1 1h4v4H1', 1.3, '#fff'),
  anno1: f('M7 2l6 13h-3L7 10l-3 5H1z', '#fff') + s('M11 2h3v3h-3z', 1.2, '#fff'), anno2: f('M7 2l6 13h-3L7 10l-3 5H1z') + s('M13 1l-3 4h3l-2 3', 1.2), anno3: f('M8 1l6 14h-3L8 9l-3 6H2zM7 5h2v6H7z'),
  shapes: s('M1 1h5v5H1zM2 15l3-6 4 6zM12 1v3') + '<circle cx="12" cy="8" r="3" fill="none" stroke="currentColor"/>', hex: f('M8 0l6 4-6 4-6-4z', '#dfe3e8') + f('M2 5l6 4 6-4v5l-6 4-6-4z', '#559fe0'),
  leaf: s('M1 4V1h3M12 1h3v3M1 12v3h3M12 15h3v-3M4 12q0-7 8-8-1 8-8 8z', 1.2, '#b6babf'), tag: f('M5 4l6-3 3 6-4 8-6-4z', '#eee'),
  cards: f('M1 6h8v8H1z', '#e8b93c') + f('M7 1h7v7H7z', '#59a6dc') + s('M7 12l3 3 6-6', 2, '#4bd067'), full: s('M1 2h14v12H1zM4 9v3h3M9 4h3v3', 1.3),
  c1: f('M1 2h13l-2 2H6l-4 9z') + f('M6 6h7l-7 5z', '#9ca3ad'), c2: s('M2 1v13h13M3 13l8-8', 1.2, 'currentColor', dash) + f('M5 5h7v4z'), c3: s('M4 2v12M4 4h8v5H5M8 5v6', 1.3, 'currentColor', dash), c4: s('M3 14V3h10L5 12', 1.2, 'currentColor', dash),
  c5: f('M2 1h7v12H2z') + s('M7 7h8v7H7zM11 7v7M7 10.500h8', 1.2), c6: '<circle cx="7" cy="7" r="6" fill="#a9dcf5"/>' + s('M3 5h6M8 8h7v7H8z', 1.3, '#5a859f'), c7: '<circle cx="8" cy="8" r="7" fill="#a9dcf5"/>' + s('M1 8h14M8 1v14M3 4l10 8M3 12l10-8', 1, '#477ea3'),
  c8: s('M6 2l3 4-3 4-3-4z') + f('M11 9h4v4h-4z', '#65a6dd'), c9: s('M6 2l3 4-3 4-3-4zM10 14l2-4 2 4'), c10: s('M5 2l3 4-3 4-3-4z') + f('M8 5l7 7-3 .5L10 15z', '#fff'), c11: s('M5 2l3 4-3 4-3-4zM12 12l3 3') + '<circle cx="11" cy="10" r="2.500" fill="none" stroke="currentColor"/>',
  c12: s('M3 3v11M3 8l5-3v5l5-2V3M3 12h8', 1.3, 'currentColor', dash), c13: s('M4 1v14M1 4h10q4 0 4 4t-4 3', 1.3, B), c14: s('M5 2v13M1 6l4-3 4 3', 1.6, '#ddd') + f('M8 4l7 8-3 .5L10 16z', '#fff'),
  c15: s('M5 1v6M1 5h10q4 1 3 5-1 3-6 3', 1.3, '#a7c9e2', dash), c16: '<circle cx="5" cy="5" r="4" fill="#ddd"/>' + s('M6 10h6q4 1 2 4H8', 1.3, B), c17: s('M5 1l3 4-3 4-3-4z') + s('M7 10h5q4 1 2 4H8', 1.3, B),
  c18: s('M2 1v13h13M6 9h4v4', 1.3, 'currentColor', dash), c19: s('M3 14V5l4-3M3 14h11V3M6 12l6-7', 1.2, '#a7c9e2', dash), c20: s('M1 14l6-8 6 6M2 2v12h13', 1.2, 'currentColor', dash), c21: s('M2 12L8 2M4 14L12 6M8 14h7', 1.3),
  c22: '<circle cx="7" cy="7" r="6" fill="none" stroke="currentColor"/>' + s('M3 3l8 8') + f('M9 9h6v5H9z', '#eed3a2'), c23: s('M1 14q5-3 7-12l6 9M4 7h9') + f('M9 9h6v5H9z', '#eed3a2'), c24: s('M1 13q2-9 10-11', 1.3, 'currentColor', dash) + f('M8 7h7v8H8z', '#bfe1f5'),
  c26: s('M4 5v10M1 8l3-3', 1.6) + f('M3 1h8v4H3z') + s('M7 7h8v7H7zM11 7v7M7 10.500h8', 1.2), c27: s('M5 5v10M1 8l4-3M8 1l2 4-2 4-3-4z', 1.5) + f('M11 10h4v4h-4z', '#65a6dd'),
};
icons.c25 = icons.c14;

const swatches = { r: 'red', g: 'green', d: 'dark', w: 'white', p: 'rose', n: 'brown', s: 'salmon', y: 'gold', a: 'azure', b: 'blue' };
const layers = `r C-TOPO-CONT-TEXT-N|g C-TOPO-FEAT|d C-TOPO-GRAD|r C-TOPO-GRAD-CUTS|d C-TOPO-GRAD-FILL|w C-TOPO-GRAD-TEXT|p C-TOPO-MAJR|g C-TOPO-MAJR-N|n C-TOPO-MINR|s C-TOPO-MINR-N|w C-TOPO-TEXT|y C-TOPO-USER|a C-TOPO-WDRP|a C-TOPO-WSHD|w C-TOPO-WSHD-TEXT|b C-WATR-APPT|w C-WATR-APPT-PATT|b C-WATR-CNTR|b C-WATR-FITT|w C-WATR-FITT-PATT|b C-WATR-PIPE|w C-WATR-PIPE-PATT|b C-WATR-PROF|b C-WATR-SCTN|b C-WATR-TABL|w C-WATR-TEXT|w Defpoints|w text|w titleBlockDetails|b V-BLDG-OTLN`.split('|');
document.querySelector('.layerlist').innerHTML = layers.map(l =>
  `<li role="option"><span data-icon="bulb"></span><span data-icon="sun"></span><span data-icon="lock"></span><span class="swatch ${swatches[l[0]]}"></span>${l.slice(2)}</li>`).join('');

const tree = [['doc', 'Duffy_TitleBlock', 2], ['tpoint', 'Points'], ['tgroup', 'Point Groups'], ['tsurf', 'Surfaces'], ['talign', 'Alignments', 1], ['tfeat', 'Feature Lines'], ['tsite', 'Sites'], ['tcatch', 'Catchments'], ['tpipe', 'Pipe Networks', 1], ['tpipe', 'Pressure Networks'], ['tbridge', 'Bridges'], ['tturn', 'Turnouts and Crossovers', 1], ['tcorr', 'Corridors'], ['tasm', 'Assemblies', 1]];
document.querySelector('.tree').innerHTML = tree.map(([i, t, e]) =>
  `<li>${e ? `<b class="${e === 1 ? 'more' : ''}"></b>` : '<i></i>'}<span data-icon="${i}"></span>${t}</li>`).join('');

const strip = ['em'];
for (let i = 1; i <= 27; i++) {
  strip.push('c' + i);
  if (i === 13 || i === 14 || i === 17) strip.push('hr');
  if (i === 24) strip.push('em');
}
document.querySelector('.strip').innerHTML = strip.map(n => n.length === 2 && !icons[n] ? `<${n}></${n}>` : `<button data-icon="${n}"></button>`).join('').replace(/<\/hr>/g, '');

document.querySelectorAll('[data-icon]').forEach(el => {
  el.innerHTML = `<svg viewBox="0 0 16 16" overflow="visible">${icons[el.dataset.icon] || ''}</svg>`;
});
```
